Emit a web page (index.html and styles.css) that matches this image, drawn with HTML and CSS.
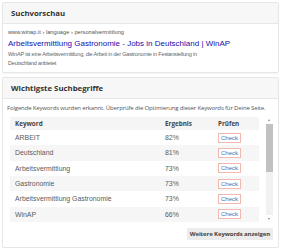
FILE: index.html
```html
<!DOCTYPE html>
<html lang="de">
<head>
<meta charset="utf-8">
<link rel="stylesheet" href="styles.css">
</head>
<body>
<div class="page">
  <section class="card">
    <header class="card-head">Suchvorschau</header>
    <div class="preview">
      <div class="url">www.winap.it › language › personalvermittlung</div>
      <a class="serp-title" href="#">Arbeitsvermittlung Gastronomie - Jobs in Deutschland | WinAP</a>
      <p class="desc">WinAP ist eine Arbeitsvermittlung, die Arbeit in der Gastronomie in Festanstellung in Deutschland anbietet</p>
    </div>
  </section>
  <section class="card card-keywords">
    <header class="card-head">Wichtigste Suchbegriffe</header>
    <p class="intro">Folgende Keywords wurden erkannt. Überprüfe die Optimierung dieser Keywords für Deine Seite.</p>
    <div class="table-box">
      <div class="table-scroll">
        <table class="kw">
          <thead>
            <tr><th class="c-kw">Keyword</th><th class="c-res">Ergebnis</th><th class="c-chk">Prüfen</th></tr>
          </thead>
          <tbody>
            <tr><td>ARBEIT</td><td>82%</td><td><span class="check">Check</span></td></tr>
            <tr><td>Deutschland</td><td>81%</td><td><span class="check">Check</span></td></tr>
            <tr><td>Arbeitsvermittlung</td><td>73%</td><td><span class="check">Check</span></td></tr>
            <tr><td>Gastronomie</td><td>73%</td><td><span class="check">Check</span></td></tr>
            <tr><td>Arbeitsvermittlung Gastronomie</td><td>73%</td><td><span class="check">Check</span></td></tr>
            <tr><td>WinAP</td><td>66%</td><td><span class="check">Check</span></td></tr>
          </tbody>
        </table>
      </div>
      <div class="scrollbar">
        <div class="sb-arrow sb-up"></div>
        <div class="sb-track"><div class="sb-thumb"></div></div>
        <div class="sb-arrow sb-down"></div>
      </div>
    </div>
    <div class="actions"><button class="more">Weitere Keywords anzeigen</button></div>
  </section>
</div>
</body>
</html>
```
FILE: styles.css
```css
* { box-sizing: border-box; }
html, body { margin: 0; padding: 0; background: #ffffff; }
body { font-family: "Liberation Sans", Arial, sans-serif; color: #555; }
.page { padding: 2px 3px 0 2px; display: flex; flex-direction: column; gap: 4px; }
.card { border: 1px solid #e6e6e6; border-radius: 2px; background: #fff; box-shadow: 0 1px 1px rgba(0,0,0,0.04); }
.card-head {
  height: 21px; background: #f7f7f7; border-bottom: 1px solid #e8e8e8;
  font-family: "Open Sans", sans-serif; font-weight: 700; font-size: 7.8px; color: #333;
  display: flex; align-items: center; padding-left: 8px;
}
.preview { padding: 4px 5px 4px 5px; }
.url { font-size: 5.7px; color: #555; line-height: 9px; white-space: nowrap; }
.serp-title { display: block; color: #1a0dab; font-size: 8px; line-height: 13px; text-decoration: none; white-space: nowrap; }
.desc { margin: 0; font-size: 5.6px; letter-spacing: -0.22px; line-height: 9px; color: #666; width: 216px; }
.intro { margin: 5px 0 0 4px; font-family: "Open Sans", sans-serif; font-size: 6px; letter-spacing: -0.15px; color: #555; line-height: 9px; white-space: nowrap; }
.table-box { display: flex; margin: 4px 5px 0 7px; height: 105px; }
.table-scroll { flex: 1; overflow: hidden; }
.kw { width: 100%; border-collapse: collapse; font-size: 6.9px; color: #5a5a5a; }
.kw th { background: #f5f5f5; height: 13px; text-align: left; font-family: "Open Sans", sans-serif; font-weight: 700; font-size: 6.3px; color: #444; padding: 0; }
.kw td { height: 15.33px; padding: 0; }
.kw tr > :first-child { padding-left: 5px; }
.kw tbody tr:nth-child(even) td { background: #f6f6f6; }
.c-kw { width: 155px; }
.c-res { width: 53px; }
.check { display: inline-block; border: 1px solid #f0b8b0; color: #4a6db0; font-size: 6px; line-height: 8px; padding: 0 2px; background: #fff; }
.scrollbar { width: 7px; margin-left: 7px; display: flex; flex-direction: column; }
.sb-arrow { height: 7px; position: relative; }
.sb-up::after, .sb-down::after { content: ""; position: absolute; left: 2px; border-left: 1.5px solid transparent; border-right: 1.5px solid transparent; }
.sb-up::after { top: 2px; border-bottom: 2px solid #888; }
.sb-down::after { top: 3px; border-top: 2px solid #888; }
.sb-track { flex: 1; background: #f1f1f1; }
.sb-thumb { height: 48px; background: #c1c1c1; }
.actions { display: flex; justify-content: flex-end; padding: 6px 5px 7px; }
.more { border: none; background: #ececec; border-radius: 1px; font-family: "Open Sans", sans-serif; font-weight: 700; font-size: 6px; letter-spacing: -0.1px; color: #444; height: 12px; padding: 0 3px; }
```
